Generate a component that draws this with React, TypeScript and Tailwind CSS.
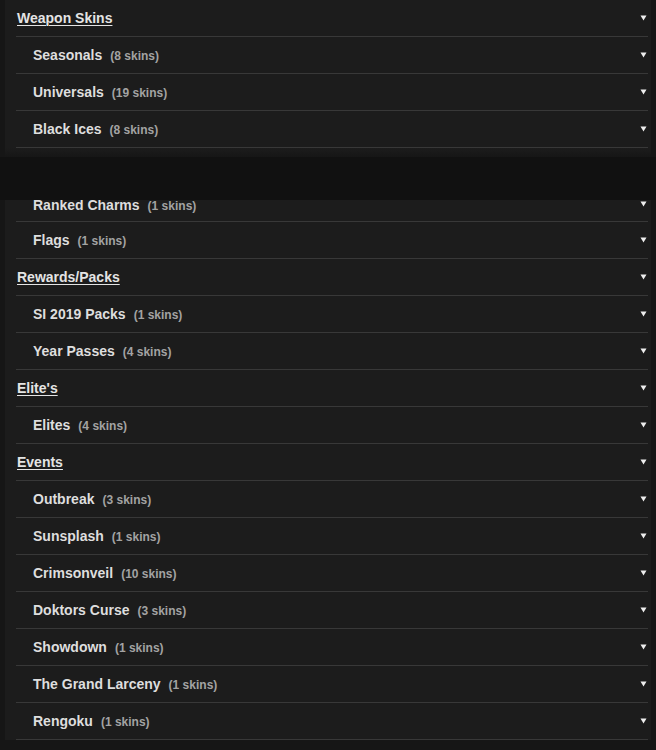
import React from "react";

type Row = { label: string; count?: number; header?: boolean };

const top: Row[] = [
  { label: "Weapon Skins", header: true },
  { label: "Seasonals", count: 8 },
  { label: "Universals", count: 19 },
  { label: "Black Ices", count: 8 },
];

const bottom: Row[] = [
  { label: "Flags", count: 1 },
  { label: "Rewards/Packs", header: true },
  { label: "SI 2019 Packs", count: 1 },
  { label: "Year Passes", count: 4 },
  { label: "Elite's", header: true },
  { label: "Elites", count: 4 },
  { label: "Events", header: true },
  { label: "Outbreak", count: 3 },
  { label: "Sunsplash", count: 1 },
  { label: "Crimsonveil", count: 10 },
  { label: "Doktors Curse", count: 3 },
  { label: "Showdown", count: 1 },
  { label: "The Grand Larceny", count: 1 },
  { label: "Rengoku", count: 1 },
];

function Arrow() {
  return (
    <svg width="7" height="6" viewBox="0 0 7 6" className="shrink-0">
      <polygon points="0.5,0.5 6.5,0.5 3.5,5.5" fill="#eeeeee" />
    </svg>
  );
}

function Label({ r }: { r: Row }) {
  if (r.header) {
    return (
      <span className="text-[14px] font-bold text-[#e4e4e4] underline underline-offset-[2px] decoration-1 leading-[16px]">
        {r.label}
      </span>
    );
  }
  return (
    <span className="flex items-baseline leading-[16px]">
      <span className="text-[14px] font-bold text-[#dedede]">{r.label}</span>
      <span className="ml-[8px] text-[12px] font-bold text-[#a3a3a3]">({r.count} skins)</span>
    </span>
  );
}

function RowItem({ r }: { r: Row }) {
  return (
    <div
      className={`flex items-center justify-between h-[37px] border-b border-[#383838] pr-[1px] ${
        r.header ? "pl-[1px]" : "pl-[17px]"
      }`}
    >
      <Label r={r} />
      <Arrow />
    </div>
  );
}

function Panel({ children }: { children: React.ReactNode }) {
  return (
    <div className="flex bg-[#161616]">
      <div className="w-[5px] shrink-0" />
      <div className="flex-1 bg-[#1c1c1c] pl-[11px] pr-[3px]">{children}</div>
      <div className="w-[5px] shrink-0" />
    </div>
  );
}

export default function App() {
  return (
    <div
      className="w-[656px] h-[750px] overflow-hidden bg-[#161616]"
      style={{ fontFamily: '"Liberation Sans", Arial, sans-serif' }}
    >
      <Panel>
        {top.map((r) => (
          <RowItem key={r.label} r={r} />
        ))}
        <div className="h-[9px] bg-gradient-to-b from-[#1c1c1c] to-[#161616] -ml-[11px] -mr-[3px]" />
      </Panel>
      <div className="h-[43px] bg-[#111111]" />
      <Panel>
        <div className="h-[22px] overflow-hidden border-b border-[#383838] flex items-start justify-between pl-[17px] pr-[1px]">
          <div className="-mt-[3px]">
            <Label r={{ label: "Ranked Charms", count: 1 }} />
          </div>
          <div className="mt-[1px]">
            <Arrow />
          </div>
        </div>
        {bottom.map((r) => (
          <RowItem key={r.label} r={r} />
        ))}
      </Panel>
    </div>
  );
}
